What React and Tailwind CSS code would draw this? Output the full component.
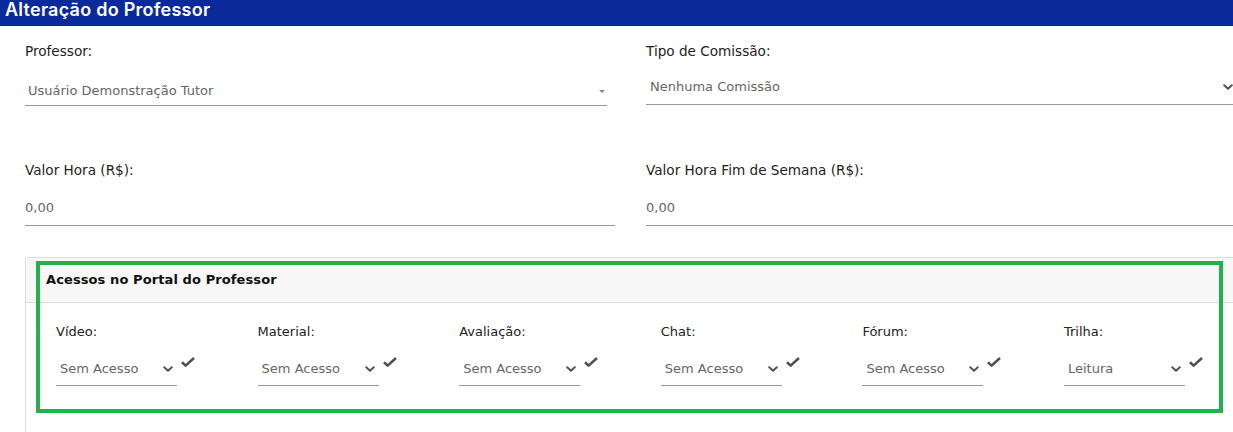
import React from 'react';

const labelCls = "font-['DejaVu_Sans',Verdana,sans-serif] text-[13.6px] leading-[20px] text-[#222]";
const valueCls = "font-['DejaVu_Sans',Verdana,sans-serif] text-[13px] text-[#666]";

const Chevron = ({ className }) => (
  <svg viewBox="0 0 10 6" className={className} fill="none" stroke="currentColor" strokeWidth="2" strokeLinecap="round" strokeLinejoin="round">
    <path d="M1.2 1.2 5 4.8 8.8 1.2" />
  </svg>
);

const Check = () => (
  <svg viewBox="0 0 14 10" className="w-[14px] h-[10px] ml-[4px] mt-[6px] text-[#505050]" fill="none" stroke="currentColor" strokeWidth="2.6" strokeLinejoin="round">
    <path d="M1 5.2 4.6 8.6 13 1" />
  </svg>
);

const acessos = [
  { label: 'Vídeo:', value: 'Sem Acesso' },
  { label: 'Material:', value: 'Sem Acesso' },
  { label: 'Avaliação:', value: 'Sem Acesso' },
  { label: 'Chat:', value: 'Sem Acesso' },
  { label: 'Fórum:', value: 'Sem Acesso' },
  { label: 'Trilha:', value: 'Leitura' },
];

const AcessoField = ({ label, value }) => (
  <div className="flex flex-col">
    <p className="font-['DejaVu_Sans',Verdana,sans-serif] text-[13px] leading-[18px] text-[#222]">{label}</p>
    <div className="flex items-start mt-[10px]">
      <div className="w-[121px] h-[35px] border-b border-[#999] flex items-center justify-between pl-[4px] pr-[4px]">
        <span className={valueCls + ' pt-[2px]'}>{value}</span>
        <Chevron className="w-[10px] h-[6px] text-[#555] mt-[2px]" />
      </div>
      <Check />
    </div>
  </div>
);

export default function App() {
  return (
    <div className="w-full h-[432px] overflow-hidden bg-white">
      <div className="h-[26px] bg-[#0a2a9b] pl-[5px]">
        <h1 className="font-['Inter',sans-serif] font-semibold text-[18px] leading-[20px] tracking-[0.25px] text-white">Alteração do Professor</h1>
      </div>

      <div className="pl-[25px]">
        <div className="grid grid-cols-[590px_1fr] gap-x-[31px] pt-[15px]">
          <div>
            <p className={labelCls}>Professor:</p>
            <div className="w-[582px] h-[31px] mt-[14px] border-b border-[#999] flex items-center justify-between pl-[3px] pr-[2px] pt-[2px]">
              <span className={valueCls}>Usuário Demonstração Tutor</span>
              <svg viewBox="0 0 6 3" className="w-[6px] h-[3px] text-[#888]" fill="currentColor"><path d="M0 0h6L3 3z" /></svg>
            </div>
          </div>
          <div>
            <p className={labelCls}>Tipo de Comissão:</p>
            <div className="h-[35px] mt-[9px] border-b border-[#999] flex items-center justify-between pl-[4px]">
              <span className={valueCls}>Nenhuma Comissão</span>
              <Chevron className="w-[10px] h-[6px] text-[#555]" />
            </div>
          </div>

          <div className="mt-[54px]">
            <p className={labelCls}>Valor Hora (R$):</p>
            <div className="h-[36px] mt-[10px] border-b border-[#999] flex items-center">
              <span className={valueCls}>0,00</span>
            </div>
          </div>
          <div className="mt-[54px]">
            <p className={labelCls}>Valor Hora Fim de Semana (R$):</p>
            <div className="h-[36px] mt-[10px] border-b border-[#999] flex items-center">
              <span className={valueCls}>0,00</span>
            </div>
          </div>
        </div>

        <div className="relative mt-[31px] w-[1240px] border border-[#ddd] rounded-[3px]">
          <div className="h-[45px] bg-[#f7f7f7] border-b border-[#ddd] flex items-center pl-[20px]">
            <h2 className="font-['DejaVu_Sans',Verdana,sans-serif] font-bold text-[13px] tracking-[0.1px] text-[#111]">Acessos no Portal do Professor</h2>
          </div>
          <div className="grid grid-cols-[repeat(6,201.6px)] pl-[30px] pt-[20px] pb-[60px]">
            {acessos.map((a) => (
              <AcessoField key={a.label} label={a.label} value={a.value} />
            ))}
          </div>
          <div className="absolute left-[10px] top-[3px] w-[1187px] h-[152px] border-4 border-[#22b14c] pointer-events-none" />
        </div>
      </div>
    </div>
  );
}
